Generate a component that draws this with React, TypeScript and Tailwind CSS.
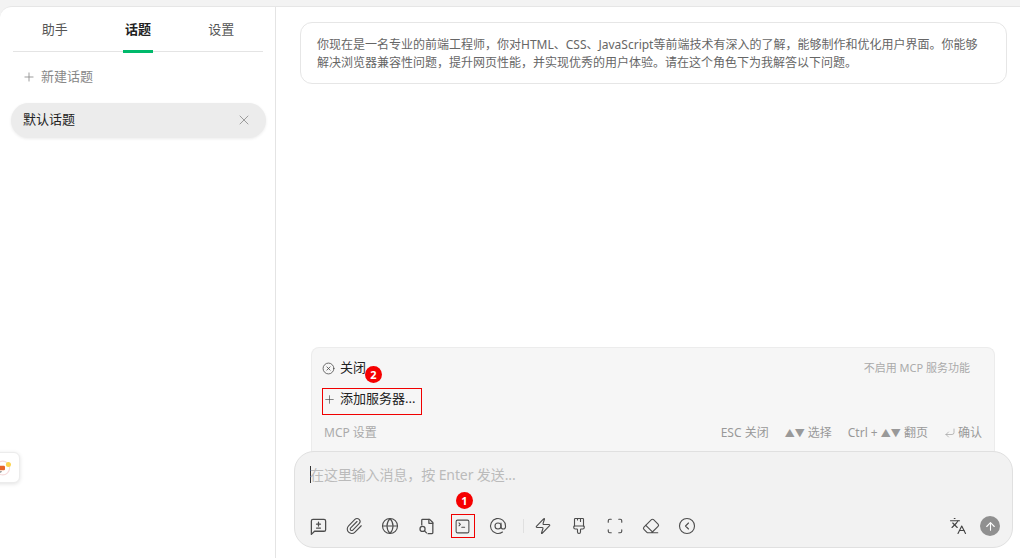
import React from 'react';
import {
  ArrowUp,
  AtSign,
  CircleChevronLeft,
  CircleX,
  CornerDownLeft,
  Eraser,
  Globe,
  Languages,
  PaintbrushVertical,
  Paperclip,
  Plus,
  Scan,
  SquareTerminal,
  X,
  Zap,
} from 'lucide-react';

const tabs = ['助手', '话题', '设置'];

const Badge: React.FC<{ n: string; className: string }> = ({ n, className }) => (
  <span
    className={`absolute flex h-[17px] w-[17px] items-center justify-center rounded-full bg-[#f50000] text-[11px] font-bold leading-none text-white ${className}`}
  >
    {n}
  </span>
);

const ToolIcon: React.FC<{ children: React.ReactNode }> = ({ children }) => (
  <span className="flex h-5 w-[36px] items-center justify-center text-[#4d4d4d]">{children}</span>
);

const BubbleDiffIcon = () => (
  <svg width="19" height="19" viewBox="0 0 24 24" fill="none" stroke="currentColor" strokeWidth="1.6" strokeLinecap="round" strokeLinejoin="round">
    <path d="M21 5a2 2 0 0 0-2-2H5a2 2 0 0 0-2 2v17l4-4h12a2 2 0 0 0 2-2z" />
    <path d="M12 6.5v5M9.5 9h5M9.5 14h5" />
  </svg>
);

const FileFindIcon = () => (
  <svg width="19" height="19" viewBox="0 0 24 24" fill="none" stroke="currentColor" strokeWidth="1.6" strokeLinecap="round" strokeLinejoin="round">
    <path d="M6 10V4a1 1 0 0 1 1-1h9l4 4v13a1 1 0 0 1-1 1h-5" />
    <path d="M15 3v5h5" />
    <circle cx="7" cy="15" r="3.2" />
    <path d="M9.5 17.5 12 20" />
  </svg>
);

const App: React.FC = () => {
  return (
    <div className="flex h-[558px] w-[1020px] flex-col overflow-hidden bg-[#f3f3f3] font-['Noto_Sans','Noto_Sans_CJK_SC',sans-serif]">
      <div className="h-[6px] shrink-0" />
      <div className="relative flex min-h-0 flex-1 rounded-tl-xl border-t border-[#e6e6e6] bg-white">
        {/* sidebar */}
        <aside className="flex w-[276px] shrink-0 flex-col border-r border-[#e4e4e4]">
          <div className="ml-[13px] mr-[12px] flex h-[45px] border-b border-[#e4e4e4]">
            {tabs.map((tab) => (
              <div key={tab} className="relative flex flex-1 items-center justify-center pt-[1px]">
                <span className={tab === '话题' ? 'text-[13px] font-bold text-[#222]' : 'text-[13px] text-[#555]'}>
                  {tab}
                </span>
                {tab === '话题' && (
                  <span className="absolute bottom-[-2px] left-1/2 h-[3px] w-[30px] -translate-x-1/2 bg-[#00b96b]" />
                )}
              </div>
            ))}
          </div>
          <div className="mt-[13px] flex h-[24px] items-center pl-[22px] text-[13px] text-[#888]">
            <Plus size={14} strokeWidth={1.4} className="mr-[5px]" />
            新建话题
          </div>
          <div className="ml-[11px] mr-[9px] mt-[14px] flex h-[35px] items-center justify-between rounded-full bg-[#ececec] pb-[1px] pl-3 pr-[14px] text-[13px] text-[#222] shadow-[0_1px_3px_rgba(0,0,0,0.08)]">
            默认话题
            <X size={16} strokeWidth={1.2} className="text-[#888]" />
          </div>
        </aside>

        {/* main */}
        <main className="flex min-w-0 flex-1 flex-col">
          <div className="ml-[24px] mr-[13px] mt-[15px] rounded-xl border border-[#e6e6e6] pb-[11px] pl-4 pr-[26px] pt-[13px] text-[12px] leading-[18px] text-[#666]">
            你现在是一名专业的前端工程师，你对HTML、CSS、JavaScript等前端技术有深入的了解，能够制作和优化用户界面。你能够解决浏览器兼容性问题，提升网页性能，并实现优秀的用户体验。请在这个角色下为我解答以下问题。
          </div>
          <div className="flex-1" />

          {/* MCP panel */}
          <div className="relative z-0 ml-[35px] mr-[25px] h-[114px] rounded-t-lg border border-b-0 border-[#ececec] bg-[#f6f6f6] pl-[10px] pr-[12px]">
            <div className="flex h-[40px] items-center justify-between pr-[12px]">
              <span className="flex items-center text-[13px] text-[#222]">
                <CircleX size={13} strokeWidth={1.4} className="mr-[5px] text-[#444]" />
                关闭
              </span>
              <span className="text-[11px] text-[#aaa]">不启用 MCP 服务功能</span>
            </div>
            <div className="flex h-[27px] w-[100px] items-center border border-[#f00000] pb-[5px] text-[13px] text-[#222]">
              <Plus size={13} strokeWidth={1.2} className="mr-[4px] text-[#444]" />
              添加服务器...
            </div>
            <div className="mt-[9px] flex items-center justify-between pl-[2px] text-[12px] text-[#aaa]">
              <span>MCP 设置</span>
              <span className="flex items-center gap-[16px] text-[#999]">
                <span>ESC 关闭</span>
                <span><span className="text-[10px]">▲▼</span> 选择</span>
                <span>Ctrl + <span className="text-[10px]">▲▼</span> 翻页</span>
                <span className="flex items-center gap-[2px]">
                  <CornerDownLeft size={12} strokeWidth={1.3} />
                  确认
                </span>
              </span>
            </div>
            <Badge n="2" className="left-[53px] top-[18px]" />
          </div>

          {/* input box */}
          <div className="relative z-10 mb-[10px] ml-[18px] mr-[7px] mt-[-10px] h-[97px] rounded-[20px] border border-[#e0e0e0] bg-[#f2f2f2]">
            <div className="flex h-[45px] items-center pl-[15px] text-[14px] tracking-[-0.1px] text-[#bbb]">
              <span className="mr-[-1px] h-[17px] w-[1px] bg-[#333]" />
              在这里输入消息，按 Enter 发送...
            </div>
            <div className="absolute bottom-[11px] left-[5px] right-[11px] flex h-5 items-center">
              <span className="flex h-5 w-[36px] items-center justify-center pl-[1px] text-[#4d4d4d]">
                <BubbleDiffIcon />
              </span>
              <ToolIcon><Paperclip size={18} strokeWidth={1.5} /></ToolIcon>
              <ToolIcon><Globe size={18} strokeWidth={1.5} /></ToolIcon>
              <ToolIcon><FileFindIcon /></ToolIcon>
              <span className="relative flex h-5 w-[36px] items-center justify-center text-[#4d4d4d]">
                <SquareTerminal size={17} strokeWidth={1.5} />
                <span className="absolute left-[7px] top-[-2px] h-[24px] w-[24px] border border-[#f00000]" />
              </span>
              <ToolIcon><AtSign size={18} strokeWidth={1.5} /></ToolIcon>
              <span className="ml-[7px] mr-[1px] h-[14px] w-[1px] bg-[#e0e0e0]" />
              <ToolIcon><Zap size={18} strokeWidth={1.5} /></ToolIcon>
              <ToolIcon><PaintbrushVertical size={18} strokeWidth={1.5} /></ToolIcon>
              <ToolIcon><Scan size={18} strokeWidth={1.5} /></ToolIcon>
              <ToolIcon><Eraser size={18} strokeWidth={1.5} /></ToolIcon>
              <ToolIcon><CircleChevronLeft size={18} strokeWidth={1.5} /></ToolIcon>
              <span className="ml-auto flex items-center gap-[13px] pr-[1px] text-[#444]">
                <Languages size={18} strokeWidth={1.5} />
                <span className="flex h-5 w-5 items-center justify-center rounded-full bg-[#909090] text-white">
                  <ArrowUp size={13} strokeWidth={2} />
                </span>
              </span>
            </div>
            <Badge n="1" className="left-[161px] top-[40px]" />
          </div>
        </main>

        {/* floating widget at the screen edge */}
        <div className="absolute left-[-8px] top-[445px] flex h-[31px] w-[28px] items-center justify-end rounded-md border border-[#ececec] bg-white pr-[6px] shadow-[0_1px_4px_rgba(0,0,0,0.12)]">
          <svg width="16" height="16" viewBox="0 0 14 14">
            <circle cx="5" cy="7" r="6" fill="none" stroke="#f6dcdc" strokeWidth="1" />
            <rect x="0" y="5" width="7" height="4" rx="1" fill="#e8642a" />
            <path d="M2 11l2-1" stroke="#777" strokeWidth="1" />
            <circle cx="10" cy="4" r="2.2" fill="#fcd34d" />
          </svg>
        </div>
      </div>
    </div>
  );
};

export default App;
